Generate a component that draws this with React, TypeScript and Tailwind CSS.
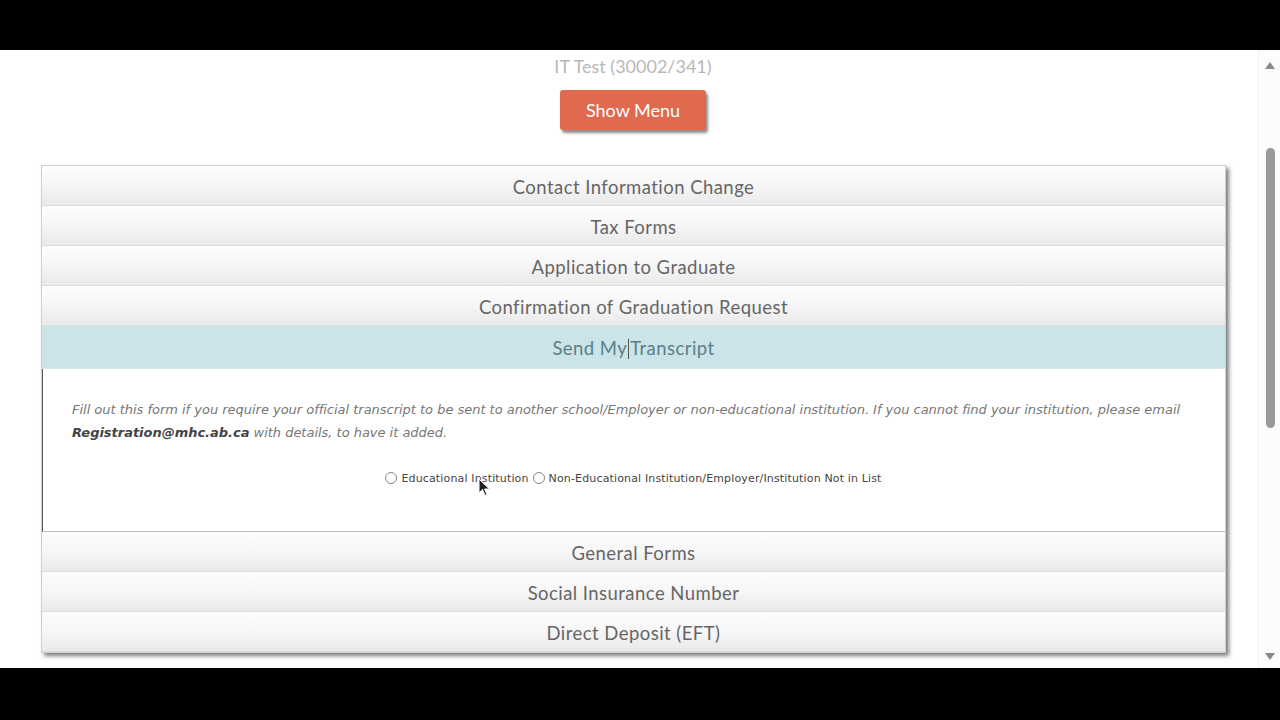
import React from "react";

const rowsTop = [
  "Contact Information Change",
  "Tax Forms",
  "Application to Graduate",
  "Confirmation of Graduation Request",
];
const rowsBottom = ["General Forms", "Social Insurance Number", "Direct Deposit (EFT)"];

function Row({ label }: { label: string }) {
  return (
    <div className="h-[40px] pt-[4px] flex items-center justify-center border-b border-[#dcdcdc] bg-gradient-to-b from-[#fdfdfd] via-[#f6f6f6] to-[#e9e9e9] text-[18.5px] text-[#666] font-['Lato',sans-serif] tracking-[0.45px]">
      {label}
    </div>
  );
}

export default function App() {
  return (
    <div className="h-[720px] w-[1280px] bg-black flex flex-col overflow-hidden">
      <div className="h-[50px] bg-black" />
      <div className="h-[618px] bg-white flex">
        <div className="flex-1 relative">
          <div className="mt-[5px] h-[22px] flex items-center justify-center text-[18px] text-[#b8b8b8] font-['Lato',sans-serif] w-[1184px] ml-[41px]">
            IT Test (30002/341)
          </div>
          <div className="w-[1184px] ml-[41px] flex justify-center mt-[13px]">
            <div className="w-[146px] h-[40px] bg-[#df6a50] rounded-[3px] shadow-[2px_3px_3px_rgba(0,0,0,0.45)] flex items-center justify-center text-white text-[18px] font-['Lato',sans-serif]">
              Show Menu
            </div>
          </div>
          <div className="w-[1185px] ml-[41px] mt-[35px] border border-[#cfcfcf] shadow-[3px_3px_4px_rgba(0,0,0,0.5)] bg-white">
            {rowsTop.map((r) => (
              <Row key={r} label={r} />
            ))}
            <div className="h-[43px] pt-[3px] flex items-center justify-center bg-[#cae4e9] border-b border-[#d6e8ec] text-[18.5px] text-[#5c7f87] font-['Lato',sans-serif] tracking-[0.45px]">
              <span>Send My</span>
              <span className="inline-block w-[1px] h-[20px] bg-[#555] mx-[1px]" />
              <span>Transcript</span>
            </div>
            <div className="h-[163px] border-l border-[#555] border-b border-b-[#bbb] pl-[29px] pr-[30px] pt-[29px]">
              <p className="text-[13px] leading-[23px] italic text-[#777] font-['DejaVu_Sans',sans-serif] tracking-[-0.02px] whitespace-nowrap">
                Fill out this form if you require your official transcript to be sent to another school/Employer or non-educational institution. If you cannot find your institution, please email
                <br />
                <span className="font-bold text-[#444]">Registration@mhc.ab.ca</span> with details, to have it added.
              </p>
              <div className="mt-[27px] flex justify-center items-center text-[11px] text-[#444] font-['DejaVu_Sans',sans-serif] tracking-[0.15px]">
                <span className="inline-block w-[12px] h-[12px] rounded-full border border-[#888] bg-white mr-[4px] -mt-[3px]" />
                <span className="mr-[4px]">Educational Institution</span>
                <span className="inline-block w-[12px] h-[12px] rounded-full border border-[#888] bg-white mr-[4px] -mt-[3px]" />
                <span>Non-Educational Institution/Employer/Institution Not in List</span>
              </div>
            </div>
            {rowsBottom.map((r) => (
              <Row key={r} label={r} />
            ))}
          </div>
          <svg className="absolute left-[478px] top-[428px]" width="13" height="19" viewBox="0 0 13 19">
            <path d="M1 1 L1 15 L4.5 11.5 L7 17.5 L9 16.6 L6.6 11 L11.5 11 Z" fill="#222" stroke="#fff" strokeWidth="1" />
          </svg>
        </div>
        <div className="w-[22px] border-l border-[#f0f0f0] bg-[#fcfcfc] flex flex-col items-center">
          <svg className="mt-[12px]" width="10" height="7" viewBox="0 0 10 7">
            <path d="M5 0 L10 7 L0 7 Z" fill="#8a8a8a" />
          </svg>
          <div className="mt-[79px] w-[9px] h-[280px] rounded-full bg-[#999] ml-[1px]" />
          <div className="flex-1" />
          <svg className="mb-[8px]" width="10" height="7" viewBox="0 0 10 7">
            <path d="M0 0 L10 0 L5 7 Z" fill="#8a8a8a" />
          </svg>
        </div>
      </div>
      <div className="h-[52px] bg-black" />
    </div>
  );
}
